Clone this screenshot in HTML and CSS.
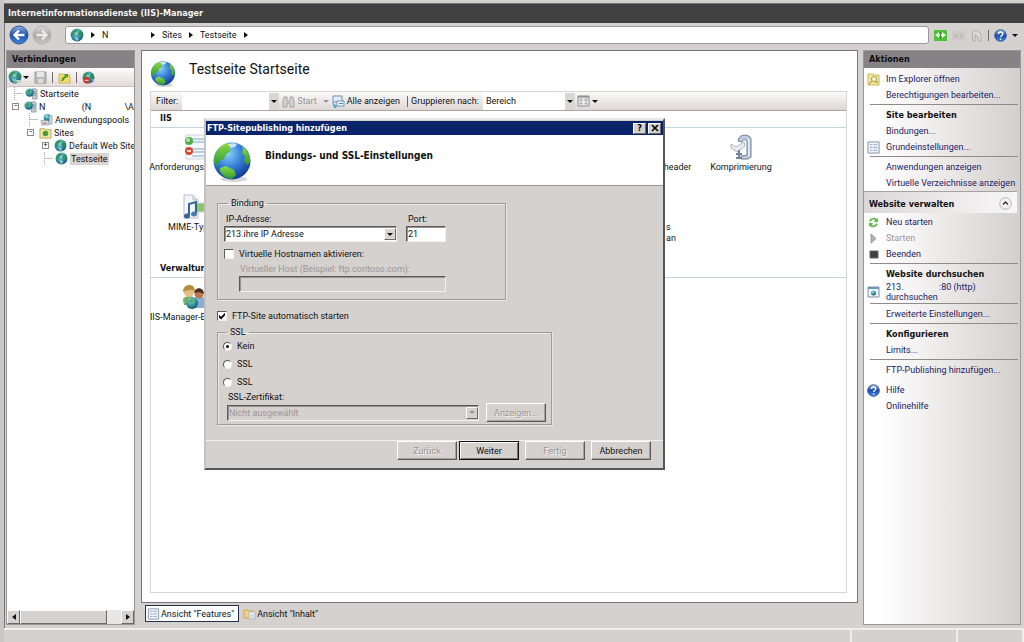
FILE: index.html
```html
<!DOCTYPE html>
<html lang="de">
<head>
<meta charset="utf-8">
<title>Internetinformationsdienste (IIS)-Manager</title>
<link rel="stylesheet" href="styles.css">
</head>
<body>
<svg class="defs" aria-hidden="true">
  <defs>
    <radialGradient id="sea" cx=".4" cy=".3" r=".75">
      <stop offset="0" stop-color="#8fd0f8"/><stop offset=".45" stop-color="#3a86dc"/><stop offset="1" stop-color="#0d3391"/>
    </radialGradient>
    <radialGradient id="teal" cx=".4" cy=".3" r=".75">
      <stop offset="0" stop-color="#a5e2ea"/><stop offset=".5" stop-color="#3b9aa8"/><stop offset="1" stop-color="#0b4f68"/>
    </radialGradient>
    <linearGradient id="land" x1="0" y1="0" x2="0" y2="1">
      <stop offset="0" stop-color="#8fd848"/><stop offset="1" stop-color="#2c9a2c"/>
    </linearGradient>
    <linearGradient id="navblue" x1="0" y1="0" x2="0" y2="1">
      <stop offset="0" stop-color="#8fb2e6"/><stop offset=".5" stop-color="#1d4fae"/><stop offset="1" stop-color="#3f8ae0"/>
    </linearGradient>
    <linearGradient id="navgrey" x1="0" y1="0" x2="0" y2="1">
      <stop offset="0" stop-color="#dcdad9"/><stop offset=".5" stop-color="#a9a7a8"/><stop offset="1" stop-color="#c9c7c7"/>
    </linearGradient>
    <symbol id="globe" viewBox="0 0 40 42">
      <ellipse cx="22" cy="38" rx="13" ry="3" fill="#888" opacity=".35"/>
      <circle cx="20" cy="20" r="18.500" fill="url(#sea)"/>
      <path d="M2 20C2 11 8 4 15 2l5 2-3 4 2 2-5 3-2 5-4 1-3 6c-2-1-3-3-3-5z" fill="url(#land)"/>
      <path d="M30 5c4 3 7 7 8 12v5l-3 2-3-4 1-5-3-3 1-4z" fill="url(#land)"/>
      <path d="M8 27l6-2 8 4 2 5-4 4c-6 0-10-4-12-8z" fill="url(#land)"/>
      <path d="M16 3c3-1 7-1 9 0l-2 3-4 1z" fill="#e8f6ff" opacity=".8"/>
    </symbol>
    <symbol id="world" viewBox="0 0 14 14">
      <circle cx="7" cy="7" r="6.400" fill="url(#teal)"/>
      <path d="M1 7c0-3 2-5 5-6l2 2-3 2-1 3zM9 3l3 1 1 4-3 1-2-3z" fill="#2f8c50" opacity=".8"/>
      <path d="M4 9l4 0 1 3-3 1z" fill="#9fd8e4" opacity=".7"/>
    </symbol>
    <symbol id="server" viewBox="0 0 14 14">
      <path d="M8 2h4l1 1v10H8z" fill="#c4ccd2" stroke="#7c868c" stroke-width=".7"/>
      <path d="M9 5h3M9 7h3M9 9h3" stroke="#6b757b" stroke-width=".7"/>
      <circle cx="5" cy="6" r="4.500" fill="url(#teal)"/>
      <path d="M2 5l3-3 1 3-2 2z" fill="#3c9a4c"/>
    </symbol>
    <symbol id="help" viewBox="0 0 14 14">
      <circle cx="7" cy="7" r="6.400" fill="url(#navblue)" stroke="#24427e" stroke-width=".6"/>
      <path d="M4.800 5.500c0-3 4.600-3 4.600 0 0 1.600-2.300 1.500-2.300 3.200M7.100 10v1.500" fill="none" stroke="#fff" stroke-width="1.500"/>
    </symbol>
    <symbol id="window" viewBox="0 0 14 14">
      <path d="M1 1h12v12H1z" fill="#eef3f8" stroke="#7d8fa5"/>
      <path d="M3 4h3M3 7h3M3 10h3M7 4h4M7 7h4M7 10h4" stroke="#8fa6bf" stroke-width="1"/>
    </symbol>
  </defs>
</svg>

<div class="app">
  <header class="titlebar">Internetinformationsdienste (IIS)-Manager</header>

  <nav class="navbar">
    <div class="navbuttons">
      <button class="plain" aria-label="Zurück"><svg width="20" height="20" viewBox="0 0 20 20"><circle cx="10" cy="10" r="9" fill="url(#navblue)" stroke="#3a5488"/><path d="M15.500 10H6M10 5.500L5.500 10l4.500 4.500" fill="none" stroke="#fff" stroke-width="2.400"/></svg></button>
      <button class="plain" aria-label="Vorwärts"><svg width="20" height="20" viewBox="0 0 20 20"><circle cx="10" cy="10" r="9" fill="url(#navgrey)" stroke="#b5b2b1"/><path d="M4.500 10H14M10 5.500l4.500 4.500-4.500 4.500" fill="none" stroke="#ecebea" stroke-width="2.400"/></svg></button>
    </div>
    <div class="address">
      <svg width="14" height="14"><use href="#world"/></svg>
      <i class="tri-r"></i><span class="crumb-host">N</span>
      <i class="tri-r"></i><span>Sites</span>
      <i class="tri-r"></i><span>Testseite</span>
      <i class="tri-r"></i>
    </div>
    <div class="navtools">
      <button class="plain" aria-label="Aktualisieren"><svg width="13" height="13" viewBox="0 0 13 13"><path d="M0 1h13v11H0z" fill="#4fc03c"/><path d="M5 3L1 6l4 3V7h2V5H5zM8 9l4-3-4-3v2H7v2h1z" fill="#e6fadd"/><path d="M6.500 3v7" stroke="#2c8e24"/></svg></button>
      <button class="plain" aria-label="Anhalten"><svg width="13" height="13" viewBox="0 0 13 13"><path d="M0 2h13v9H0z" fill="#cbc8c6"/><path d="M2 5l3 3M5 5L2 8M8 5l3 3M11 5L8 8" stroke="#b0adab"/></svg></button>
      <button class="plain" aria-label="Startseite"><svg width="13" height="13" viewBox="0 0 13 13"><path d="M2 4l4-3 5 4v7H8V8l-3-3v7H3z" fill="#dedbd9" stroke="#b0adab"/></svg></button>
      <i class="bar"></i>
      <button class="plain" aria-label="Hilfe"><svg width="13" height="13"><use href="#help"/></svg></button>
      <i class="tri-d"></i>
    </div>
  </nav>

  <div class="workspace">
    <aside class="panel connections">
      <h2 class="panel-head">Verbindungen</h2>
      <div class="tools">
        <svg width="14" height="14" viewBox="0 0 14 14"><use href="#world"/><path d="M8 10h5v3H9z" fill="#b9d5c2"/></svg>
        <i class="tri-d"></i>
        <svg class="save" width="13" height="13" viewBox="0 0 13 13"><path d="M1 1h11v11H1z" fill="#bdbcbd" stroke="#9a999b"/><path d="M3 1h7v5H3z" fill="#e8e7e7"/><path d="M4 8h5v4H4z" fill="#ddd"/></svg>
        <i class="bar"></i>
        <svg width="13" height="13" viewBox="0 0 13 13"><path d="M1 3h4l1 1h6v8H1z" fill="#f0dc6c" stroke="#c2a83c" stroke-width=".7"/><path d="M3 10c1-3 2-4 4-5L6 3l4 0 0 4-1-1c-2 1-3 2-4 4z" fill="#4f9a2e"/></svg>
        <i class="bar"></i>
        <svg width="13" height="13" viewBox="0 0 14 14"><use href="#world"/><circle cx="5" cy="10" r="3.500" fill="#c8322c"/><path d="M3 10h4" stroke="#fff"/><path d="M10 9h3v4z" fill="#a7b7c4"/></svg>
      </div>
      <ul class="tree">
        <li class="lvl0"><svg width="13" height="13"><use href="#server"/></svg><span>Startseite</span></li>
        <li class="lvl0 node"><i class="box">−</i><svg width="13" height="13"><use href="#server"/></svg><span class="host">N</span><span class="domain">(N</span><span>\A</span></li>
        <li class="lvl1"><svg width="13" height="13" viewBox="0 0 14 14"><circle cx="8" cy="5" r="4" fill="url(#teal)"/><path d="M1 8h8v5H2zM10 3h3v9h-3z" fill="#d3dbe2" stroke="#8294a5" stroke-width=".7"/><path d="M3 11h4" stroke="#c34a3e"/></svg><span>Anwendungspools</span></li>
        <li class="lvl1 node"><i class="box">−</i><svg width="13" height="13" viewBox="0 0 14 14"><path d="M1 3h5l1 1h6v9H1z" fill="#f0e7a0" stroke="#b7a85a"/><circle cx="7" cy="8" r="3" fill="#4a9c3a"/></svg><span>Sites</span></li>
        <li class="lvl2 node"><i class="box">+</i><svg width="13" height="13"><use href="#world"/></svg><span>Default Web Site</span></li>
        <li class="lvl2"><svg width="13" height="13"><use href="#world"/></svg><span class="selected">Testseite</span></li>
      </ul>
      <div class="scrollbar"><button aria-label="Links"><i class="tri-l"></i></button><div class="thumb"></div><button aria-label="Rechts"><i class="tri-r"></i></button></div>
    </aside>

    <main class="center">
      <section class="page">
        <div class="page-title"><svg width="26" height="28"><use href="#globe"/></svg><h1>Testseite Startseite</h1></div>
        <div class="features">
          <div class="filterbar">
            <label for="filter">Filter:</label>
            <div class="combo filter-combo"><input id="filter" type="text"><span class="drop"><i class="tri-d"></i></span></div>
            <button class="plain start" disabled><svg width="13" height="13" viewBox="0 0 13 13"><path d="M1 12V6l1-4h3v4h3V2h3l1 4v6H8V8H5v4z" fill="#d5d2d3" stroke="#a5a1a3"/></svg>Start</button>
            <i class="tri-d dim"></i>
            <button class="plain all"><svg width="13" height="13" viewBox="0 0 13 13"><path d="M1 1h9v6H1z" fill="#e4edf6" stroke="#6a8fb5"/><path d="M5 6h7v5H5z" fill="#f5f9fc" stroke="#6a8fb5"/><path d="M0 7l5 4-1 2H2z" fill="#58acd0"/><path d="M7 8.500h4" stroke="#4a90b8"/></svg>Alle anzeigen</button>
            <i class="bar"></i>
            <label for="group">Gruppieren nach:</label>
            <div class="combo group-combo"><select id="group"><option>Bereich</option></select><span class="drop"><i class="tri-d"></i></span></div>
            <svg width="13" height="12" viewBox="0 0 13 12"><path d="M1 1h11v10H1z" fill="#eee" stroke="#8c8a8b"/><path d="M1 2h11" stroke="#777"/><path d="M3 4h2v2H3zM8 4h2v2H8zM3 8h2v1H3zM8 8h2v1H8z" fill="#fff" stroke="#9a9899" stroke-width=".8"/></svg>
            <i class="tri-d"></i>
          </div>

          <h3 class="group">IIS</h3>
          <div class="icons">
            <div class="item">
              <svg width="26" height="26" viewBox="0 0 26 26"><path d="M6 1h19v24H6z" fill="#f5f8fb" stroke="#cdd5dc"/><path d="M12 5h12M12 8h12M12 15h12M12 18h12M12 22h12" stroke="#7fa5c4"/><circle cx="9" cy="7" r="4" fill="#4fae4a"/><circle cx="8" cy="6" r="2" fill="#b6e4a8"/><circle cx="9" cy="17" r="4" fill="#d24a35"/><path d="M7 17h4" stroke="#fff" stroke-width="1.500"/></svg>
              <span>Anforderungsfilterung</span>
            </div>
            <div class="item header-item"><span>HTTP-Antwortheader</span></div>
            <div class="item">
              <svg width="26" height="26" viewBox="0 0 26 26"><path d="M11 4c2-4 11-4 12 1v18l-3 2h-7v-3l6-1V8c0-3-5-3-5 0l-4-1z" fill="#bccbdd" stroke="#6c7f98"/><path d="M3 10l5 3 8-5 1 4-8 6-6-4z" fill="#e9ecef" stroke="#9aa5b0" stroke-width=".8"/><path d="M11 16v8M8 20h6M8 24h6" stroke="#71829a" stroke-width="2"/><path d="M21 5v17" stroke="#e9f0f7" stroke-width="1.500"/></svg>
              <span>Komprimierung</span>
            </div>
          </div>
          <div class="icons">
            <div class="item">
              <svg width="26" height="26" viewBox="0 0 26 26"><path d="M4 1h9l5 5v18H4z" fill="#f4f7fa" stroke="#b4bfca"/><path d="M13 1v5h5" fill="#dbe4ec" stroke="#b4bfca"/><path d="M15 9h11v9H15z" fill="#8cc665" stroke="#c9dfea"/><path d="M9 21V10l7-2v11" fill="none" stroke="#356396" stroke-width="2"/><ellipse cx="7" cy="22" rx="3" ry="2.500" fill="#356396"/><ellipse cx="14" cy="20" rx="3" ry="2.500" fill="#4b7db4"/></svg>
              <span>MIME-Typen</span>
            </div>
            <div class="item header-item tail"><span>s<br>an</span></div>
          </div>
          <h3 class="group">Verwaltung</h3>
          <div class="icons">
            <div class="item">
              <svg width="26" height="26" viewBox="0 0 26 26"><path d="M3 16c0-5 12-5 13 0v5H4z" fill="#7fae5b"/><path d="M14 16c0-5 11-5 12 0v8H14z" fill="#88aed6"/><circle cx="9" cy="8" r="5" fill="#e2bd86"/><path d="M3 8c0-9 12-9 12-1-4-2-8-1-12 1z" fill="#b98b3c"/><circle cx="19" cy="10" r="4.500" fill="#b77850"/><path d="M14 9c1-7 10-6 10 1-3-2-7-2-10-1z" fill="#4a2e20"/><circle cx="12" cy="19" r="6" fill="url(#teal)"/><path d="M8 17l4-3 2 3-3 3z" fill="#57ae66"/></svg>
              <span>IIS-Manager-Benutzer</span>
            </div>
          </div>
        </div>
      </section>
      <div class="viewtabs">
        <button class="tab active"><svg width="13" height="12"><use href="#window"/></svg>Ansicht "Features"</button>
        <button class="tab"><svg width="13" height="12" viewBox="0 0 13 12"><path d="M1 2h4l1 1h4v7H1z" fill="#f1d28a" stroke="#d0a450"/><path d="M6 4h6v7H6z" fill="#f4f6f9" stroke="#a4adba" stroke-width=".8"/><path d="M7 7h4M7 9h4" stroke="#8fa6bf" stroke-width=".7"/></svg>Ansicht "Inhalt"</button>
      </div>
    </main>

    <aside class="panel actions">
      <h2 class="panel-head">Aktionen</h2>
      <div class="action-body">
        <a href="#" class="act"><svg width="13" height="13" viewBox="0 0 13 13"><path d="M1 1h5l1 1h5v10H1z" fill="#f3e69a" stroke="#c9b95c"/><circle cx="7" cy="6" r="2.500" fill="#fdf9de" stroke="#a2985a"/><path d="M5 8l-3 3M8 9h3" stroke="#8f854a"/></svg><span>Im Explorer öffnen</span></a>
        <a href="#" class="act"><span>Berechtigungen bearbeiten...</span></a>
        <hr>
        <h3 class="act">Site bearbeiten</h3>
        <a href="#" class="act"><span>Bindungen...</span></a>
        <a href="#" class="act"><svg width="13" height="13"><use href="#window"/></svg><span>Grundeinstellungen...</span></a>
        <hr>
        <a href="#" class="act"><span>Anwendungen anzeigen</span></a>
        <a href="#" class="act"><span>Virtuelle Verzeichnisse anzeigen</span></a>
        <div class="manage"><h3>Website verwalten</h3><button class="plain" aria-label="Einklappen"><svg width="13" height="13" viewBox="0 0 13 13"><circle cx="6.500" cy="6.500" r="5.800" fill="#f3f1f2" stroke="#b3b1b4"/><path d="M4 7.500L6.500 5 9 7.500" fill="none" stroke="#333" stroke-width="1.400"/></svg></button></div>
        <a href="#" class="act"><svg width="13" height="13" viewBox="0 0 13 13"><path d="M2 5c2-4 6-4 8-2l1-1v4H7l1-2C6 3 4 4 4 6zM11 8c-2 4-6 4-8 2l-1 1V7h4l-1 2c2 1 4 0 4-2z" fill="#62bb4c"/></svg><span>Neu starten</span></a>
        <span class="act off"><svg width="13" height="13" viewBox="0 0 13 13"><path d="M4 2l5 4.500L4 11z" fill="#b5b2b2" stroke="#999"/></svg><span>Starten</span></span>
        <a href="#" class="act"><svg width="13" height="13" viewBox="0 0 13 13"><path d="M3 3h8v7H3z" fill="#3d3f42" stroke="#666"/></svg><span>Beenden</span></a>
        <hr>
        <h3 class="act">Website durchsuchen</h3>
        <a href="#" class="act two"><svg width="13" height="12" viewBox="0 0 13 12"><path d="M1 1h11v10H1z" fill="#f1f4f7" stroke="#7d8fa5"/><path d="M1 2h11" stroke="#6f94bb" stroke-width="2"/><circle cx="6.500" cy="7" r="2.500" fill="url(#teal)"/></svg><span><span class="ip">213.</span>:80 (http)<br>durchsuchen</span></a>
        <hr>
        <a href="#" class="act"><span>Erweiterte Einstellungen...</span></a>
        <hr>
        <h3 class="act">Konfigurieren</h3>
        <a href="#" class="act"><span>Limits...</span></a>
        <hr>
        <a href="#" class="act"><span>FTP-Publishing hinzufügen...</span></a>
        <a href="#" class="act help"><svg width="13" height="13"><use href="#help"/></svg><span>Hilfe</span></a>
        <a href="#" class="act"><span>Onlinehilfe</span></a>
      </div>
    </aside>
  </div>

  <footer class="status"><span class="grow"></span><span class="cell-a"></span><span class="cell-b"></span></footer>

  <form class="dialog" role="dialog" aria-labelledby="dlg">
    <div class="dlg-title"><span id="dlg">FTP-Sitepublishing hinzufügen</span><button type="button" class="cap" aria-label="Hilfe">?</button><button type="button" class="cap" aria-label="Schließen"><svg width="8" height="8" viewBox="0 0 8 8"><path d="M1 1l6 6M7 1L1 7" stroke="#000" stroke-width="1.600"/></svg></button></div>
    <div class="dlg-head"><svg width="40" height="42"><use href="#globe"/></svg><h2>Bindungs- und SSL-Einstellungen</h2></div>
    <div class="dlg-body">
      <fieldset class="binding">
        <legend>Bindung</legend>
        <div class="pair">
          <div class="field ip-field"><label for="addr">IP-Adresse:</label><div class="combo sunken"><select id="addr"><option>213.ihre IP Adresse</option></select><span class="drop raised"><i class="tri-d"></i></span></div></div>
          <div class="field port-field"><label for="port">Port:</label><input id="port" class="sunken" type="text" value="21"></div>
        </div>
        <label class="check"><input type="checkbox">Virtuelle Hostnamen aktivieren:</label>
        <div class="field vhost"><label for="vhost">Virtueller Host (Beispiel: ftp.contoso.com):</label><input id="vhost" class="sunken" type="text" disabled></div>
      </fieldset>
      <label class="check auto"><input type="checkbox" checked>FTP-Site automatisch starten</label>
      <fieldset class="ssl">
        <legend>SSL</legend>
        <label class="radio"><input type="radio" name="ssl" checked>Kein</label>
        <label class="radio"><input type="radio" name="ssl">SSL</label>
        <label class="radio"><input type="radio" name="ssl">SSL</label>
        <label class="cert-label" for="cert">SSL-Zertifikat:</label>
        <div class="cert"><div class="combo sunken off"><select id="cert" disabled><option>Nicht ausgewählt</option></select><span class="drop raised"><i class="tri-d dim"></i></span></div><button type="button" class="btn" disabled>Anzeigen...</button></div>
      </fieldset>
    </div>
    <div class="dlg-foot">
      <button type="button" class="btn" disabled>Zurück</button><button type="button" class="btn default">Weiter</button><button type="button" class="btn spaced" disabled>Fertig</button><button type="button" class="btn spaced">Abbrechen</button>
    </div>
  </form>
</div>
</body>
</html>
```

FILE: styles.css
```css
:root {
  --face: #d5d1cf;
  --text: Roboto, "Liberation Sans", sans-serif;
  --strong: "DejaVu Sans Condensed", "Open Sans", sans-serif;
}
* { box-sizing: border-box; }
body {
  margin: 0;
  background: var(--face);
  color: #111;
  font: 9px/12px var(--text);
}
h1, h2, h3, ul, fieldset { margin: 0; padding: 0; }
h2, h3 { font-size: 9px; font-weight: bold; }
h2, h3, .titlebar, .dlg-title { font-family: var(--strong); }
svg { flex: none; display: block; }
i { flex: none; font-style: normal; }
input, select, button { font: inherit; color: inherit; margin: 0; min-width: 0; }
a { color: #1c1c62; text-decoration: none; }
.defs { position: absolute; width: 0; height: 0; }
.plain { display: flex; align-items: center; border: 0; padding: 0; background: none; }

.tri-d { border: 3px solid transparent; border-top-color: #111; border-bottom: 0; }
.tri-r { border: 3px solid transparent; border-left: 4px solid #111; border-right: 0; }
.tri-l { border: 3px solid transparent; border-right: 4px solid #111; border-left: 0; }
.dim { border-top-color: #99959a; }
.bar { width: 1px; height: 11px; background: #6f6b6c; }

.app { position: relative; display: flex; flex-direction: column; min-height: 100vh; border-left: 4px solid #c9c6c5; }
.titlebar {
  margin-top: 3px;
  height: 20px;
  padding: 0 4px;
  background: #414141;
  border-top: 1px solid #77757a;
  color: #f4f4f4;
  font-weight: bold;
  line-height: 18px;
}
.navbar { display: flex; align-items: center; height: 27px; padding: 0 6px 3px 4px; border-left: 1px solid #77757a; }
.navbuttons { display: flex; gap: 3px; width: 56px; height: 22px; align-items: center; }
.address {
  flex: 1;
  display: flex;
  align-items: center;
  gap: 7px;
  height: 18px;
  padding: 0 4px;
  background: #fff;
  border: 1px solid #9d9a9c;
  border-radius: 3px;
}
.crumb-host { width: 42px; }
.navtools { display: flex; align-items: center; gap: 5px; margin-left: 5px; }

.workspace { flex: 1; display: grid; grid-template-columns: 129px minmax(0, 1fr) 158px; padding: 0 3px 3px 1px; border-left: 1px solid #77757a; }
.panel { display: flex; flex-direction: column; min-width: 0; border: 1px solid #9a9799; }
.panel-head { height: 17px; padding: 0 5px; line-height: 17px; background: #868286; color: #0c0c0c; }

.connections { background: #fff; }
.tools { display: flex; align-items: center; gap: 5px; height: 19px; padding: 0 1px; background: linear-gradient(#fdfbfb, #e2dad9); border-bottom: 1px solid #c8c2c2; }
.tools .tri-d { margin-left: -4px; }
.tree { flex: 1; list-style: none; overflow: hidden; }
.tree li { display: flex; align-items: center; gap: 2px; height: 13px; white-space: nowrap; }
.tree li:not(.node)::before {
  content: "";
  width: 8px;
  height: 13px;
  border-left: 1px dotted #a5a5a5;
  background: linear-gradient(#c4c4c4, #c4c4c4) 0 6px / 100% 1px no-repeat;
}
.lvl0 { padding-left: 7px; }
.lvl0.node { padding-left: 5px; }
.lvl1 { padding-left: 22px; }
.lvl1.node { padding-left: 20px; }
.lvl2 { padding-left: 37px; }
.lvl2.node { padding-left: 35px; }
.node .box { margin-right: 3px; }
.box { width: 7px; height: 7px; border: 1px solid #8a8a8a; font-size: 7px; line-height: 5px; text-align: center; }
.host { width: 41px; }
.domain { width: 41px; }
.selected { padding: 0 1px; background: #dad6d5; }
.scrollbar { display: flex; height: 14px; background: #e9e7e6; }
.scrollbar button, .thumb, .raised, .cap { background: var(--face); border: 1px solid; border-color: #fff #6b6866 #6b6866 #fff; }
.scrollbar button { width: 13px; display: flex; align-items: center; justify-content: center; padding: 0; }
.thumb { flex: none; width: 87px; margin-right: auto; }

.center { display: flex; flex-direction: column; padding: 0 5px 0 6px; }
.page { flex: 1; display: flex; flex-direction: column; padding: 9px 10px 9px 8px; background: #fff; border: 1px solid #77757a; }
.page-title { display: flex; gap: 13px; height: 31px; }
h1 { font: 14px/18px var(--text); }
.features { flex: 1; border: 1px solid #d8d5d6; }
.filterbar { display: flex; align-items: center; height: 19px; padding: 0 5px; background: linear-gradient(#fbf9f9, #ded7d6); border-bottom: 1px solid #aaa6a6; white-space: nowrap; }
.combo { display: flex; height: 17px; background: #fff; }
.combo input, .combo select { flex: 1; width: 100%; border: 0; padding: 0 1px; background: none; appearance: none; opacity: 1; outline: 0; }
.drop { flex: none; width: 10px; display: flex; align-items: center; justify-content: center; background: #d9d6d5; }
.filter-combo { width: 97px; margin: 0 3px 0 4px; }
.start { gap: 2px; color: #969296; margin-right: 6px; }
.all { gap: 2px; margin: 0 7px 0 3px; }
.filterbar .bar { margin-right: 3px; }
.group-combo { width: 92px; margin: 0 2px 0 4px; }
.group-combo select { padding: 0 3px; }
.filterbar svg + .tri-d { margin-left: 2px; }
.group { height: 17px; padding: 0 9px; line-height: 15px; border-bottom: 1px solid #c4d5e0; }
.icons { display: grid; grid-template-columns: 84px repeat(6, 92px); height: 60px; padding-top: 6px; }
.icons + .group { margin-top: 13px; }
.item { display: flex; flex-direction: column; align-items: center; gap: 2px; line-height: 11px; white-space: nowrap; }
.header-item { grid-column: 6; padding-top: 28px; }
.tail { align-items: flex-start; padding-left: 63px; }

.viewtabs { display: flex; gap: 2px; height: 22px; padding: 2px 0 3px 4px; }
.tab { display: flex; align-items: center; gap: 1px; padding: 0 4px 0 1px; border: 1px solid transparent; background: none; }
.active { background: #fff; border-color: #24304e; }

.actions { background: #fff; }
.action-body { flex: 1; padding: 3px 0; background: linear-gradient(90deg, #fff 10%, #efecec 45%, #d3cfcd); }
.act { display: flex; align-items: center; height: 16px; padding-left: 22px; line-height: 10px; white-space: nowrap; }
.act svg { width: 13px; margin: 0 6px 0 -19px; }
.two { height: 20px; }
.ip { display: inline-block; width: 53px; }
.off { color: #9a9699; }
.help { margin-top: 4px; }
.action-body hr { height: 1px; margin: 1px 2px 2px 6px; border: 0; background: #8f8b8b; }
.manage { display: flex; align-items: center; justify-content: space-between; height: 22px; margin: 0 3px 1px 0; padding: 2px 5px 0; border-top: 1px solid #a6a2a2; background: linear-gradient(90deg, #dcd8d9, #f7f6f6); }

.status { display: flex; height: 14px; border-top: 2px solid #efeeed; }
.status span { border-right: 2px solid #efeeed; }
.grow { flex: 1; }
.cell-a { width: 106px; }
.cell-b { width: 66px; }

.dialog { position: absolute; left: 200px; top: 118px; width: 461px; background: var(--face); border: 2px solid; border-color: #e9e7e6 #55565a #55565a #c5c2c0; }
.dlg-title { display: flex; align-items: center; height: 15px; padding: 0 2px 0 1px; gap: 2px; background: #0a246a; border-top: 1px solid var(--face); color: #fff; font-weight: bold; }
.dlg-title span { flex: 1; }
.cap { width: 13px; height: 11px; display: flex; align-items: center; justify-content: center; padding: 0; color: #000; font-weight: bold; }
.dlg-head { display: flex; gap: 13px; height: 51px; padding: 6px; background: #fff; border-bottom: 1px solid #9a9795; }
.dlg-head h2 { line-height: 16px; padding-top: 7px; font-size: 10px; }
.dlg-body { padding: 12px 11px 15px; }
fieldset { min-width: 0; border: 1px solid #a09c99; box-shadow: inset 1px 1px #eae8e7, 1px 1px #eae8e7; }
legend { margin-left: 4px; padding: 0 3px; line-height: 10px; }
.binding { width: 289px; height: 102px; padding: 4px 6px 0; }
.pair { display: flex; gap: 9px; }
.field { display: flex; flex-direction: column; }
.field label { padding: 0 2px; line-height: 14px; }
.ip-field { width: 173px; }
.port-field { width: 40px; }
.sunken { height: 16px; padding: 0 1px; border: 1px solid; border-color: #5c5957 #f2f1f0 #f2f1f0 #5c5957; box-shadow: inset 1px 1px #96928f; border-radius: 0; background: #fff; }
.combo.sunken { padding: 1px 0; }
.raised { width: 12px; }
.check { display: flex; align-items: center; gap: 5px; height: 12px; }
.binding .check { margin-top: 6px; }
.check input { appearance: none; width: 10px; height: 10px; background: #fff; border: 1px solid; border-color: #5c5957 #f2f1f0 #f2f1f0 #5c5957; }
.check input:checked::before { content: ""; display: block; width: 8px; height: 8px; background: #000; clip-path: polygon(12% 35%, 38% 60%, 88% 8%, 88% 42%, 38% 95%, 12% 70%); }
.vhost { width: 222px; padding-left: 15px; color: #9a9693; margin-top: 2px; }
.vhost label { padding-left: 1px; }
.vhost input { background: var(--face); }
.auto { margin: 10px 0 5px; }
.ssl { width: 335px; height: 98px; padding: 0 5px; }
.radio { display: flex; align-items: center; gap: 5px; height: 18px; }
.radio input { appearance: none; width: 9px; height: 9px; border-radius: 50%; background: #fff; border: 1px solid; border-color: #5c5957 #f2f1f0 #f2f1f0 #5c5957; }
.radio input:checked::before { content: ""; display: block; width: 3px; height: 3px; margin: 2px; border-radius: 50%; background: #000; }
.cert-label { display: block; padding-left: 5px; line-height: 12px; }
.cert { display: flex; align-items: center; gap: 7px; padding-left: 4px; }
.cert .combo { width: 253px; background: var(--face); }
.cert .drop { background: var(--face); }
.btn { width: 60px; height: 19px; padding: 0; background: var(--face); border: 1px solid; border-color: #fff #5c5957 #5c5957 #fff; box-shadow: inset -1px -1px #a5a19f; border-radius: 0; }
.btn:disabled { color: #9a9693; text-shadow: 1px 1px #f4f3f2; }
.default { border-color: #111; box-shadow: inset 1px 1px #fff, inset -1px -1px #77736f; }
.dlg-foot { display: flex; justify-content: flex-end; gap: 2px; padding: 0 12px 8px; border-top: 1px solid #f2f1f0; }
.spaced { margin-left: 4px; }
```
